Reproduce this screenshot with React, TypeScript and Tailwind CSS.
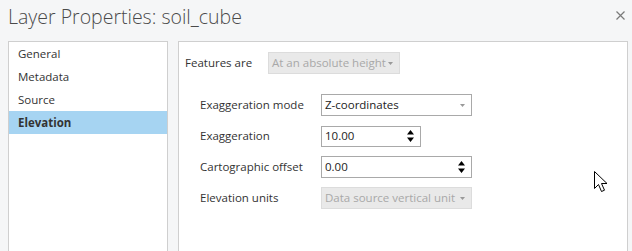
import React from 'react';

const font = { fontFamily: '"Segoe UI", "Open Sans", "Noto Sans", sans-serif' };

const Caret = ({ className = '' }: { className?: string }) => (
  <svg width="5" height="3" viewBox="0 0 5 3" className={className}>
    <path d="M0 0h5L2.5 3z" fill="currentColor" />
  </svg>
);

const Spin = () => (
  <svg width="7" height="12" viewBox="0 0 7 12" className="text-black">
    <path d="M0 4.5h7L3.5 0z M0 7.5h7L3.5 12z" fill="currentColor" />
  </svg>
);

const Row = ({ label, children }: { label: string; children: React.ReactNode }) => (
  <div className="flex items-center h-[22px]">
    <span className="w-[121px] text-[11.5px] text-[#333] whitespace-nowrap">{label}</span>
    {children}
  </div>
);

export default function App() {
  const nav = ['General', 'Metadata', 'Source', 'Elevation'];
  return (
    <div className="h-[251px] w-[632px] overflow-hidden bg-[#f5f6f7] relative whitespace-nowrap" style={font}>
      <div className="flex items-start justify-between h-[41px] pl-[8px] pr-[7px]">
        <h1 className="text-[19.5px] font-light text-[#4a4a4a] leading-none pt-[7px]">Layer Properties: soil_cube</h1>
        <svg width="9" height="9" viewBox="0 0 9 9" className="mt-[11px] text-[#7a7a7a]">
          <path d="M0.5 0.5l8 8M8.5 0.5l-8 8" stroke="currentColor" strokeWidth="1.2" />
        </svg>
      </div>
      <div className="flex gap-[10px] pl-[8px]">
        <div className="w-[160px] h-[220px] bg-white border border-[#cfcfcf]">
          {nav.map((n) => (
            <div
              key={n}
              className={`h-[23px] flex items-center pl-[9px] text-[11.5px] ${
                n === 'Elevation' ? 'bg-[#a6d4f2] font-bold text-[#333]' : 'text-[#333]'
              }`}
            >
              {n}
            </div>
          ))}
        </div>
        <div className="w-[450px] h-[220px] bg-white border border-[#cfcfcf] pl-[6px] pt-[10px]">
          <div className="flex items-center h-[22px]">
            <span className="w-[83px] text-[11.5px] text-[#333]">Features are</span>
            <div className="w-[132px] h-[22px] bg-[#e9e9e9] border border-[#dcdcdc] flex items-center pl-[3px] pr-[6px] justify-between text-[11.5px] text-[#a8a8a8]">
              <span>At an absolute height</span>
              <Caret className="text-[#999]" />
            </div>
          </div>
          <div className="pl-[15px] pt-[20px] flex flex-col gap-[9px]">
            <Row label="Exaggeration mode">
              <div className="w-[151px] h-[22px] border border-[#a9a9a9] flex items-center justify-between pl-[3px] pr-[6px] text-[11.5px] text-[#222]">
                <span>Z-coordinates</span>
                <Caret className="text-[#999]" />
              </div>
            </Row>
            <Row label="Exaggeration">
              <div className="w-[100px] h-[21px] border border-[#a9a9a9] flex items-center justify-between pl-[3px] pr-[6px] text-[11.5px] text-[#222]">
                <span>10.00</span>
                <Spin />
              </div>
            </Row>
            <Row label="Cartographic offset">
              <div className="w-[151px] h-[22px] border border-[#a9a9a9] flex items-center justify-between pl-[3px] pr-[6px] text-[11.5px] text-[#222]">
                <span>0.00</span>
                <Spin />
              </div>
            </Row>
            <Row label="Elevation units">
              <div className="w-[151px] h-[22px] bg-[#e9e9e9] border border-[#dcdcdc] flex items-center justify-between pl-[3px] pr-[6px] text-[11.5px] text-[#a8a8a8]">
                <span>Data source vertical unit</span>
                <Caret className="text-[#999]" />
              </div>
            </Row>
          </div>
        </div>
      </div>
      <svg width="18" height="26" viewBox="0 0 18 26" className="absolute left-[594px] top-[171px]">
        <path d="M0.5 0.5v17l4-4 3 7 3-1.3-3-6.7h5.5z" fill="white" stroke="black" strokeWidth="1" />
      </svg>
    </div>
  );
}
